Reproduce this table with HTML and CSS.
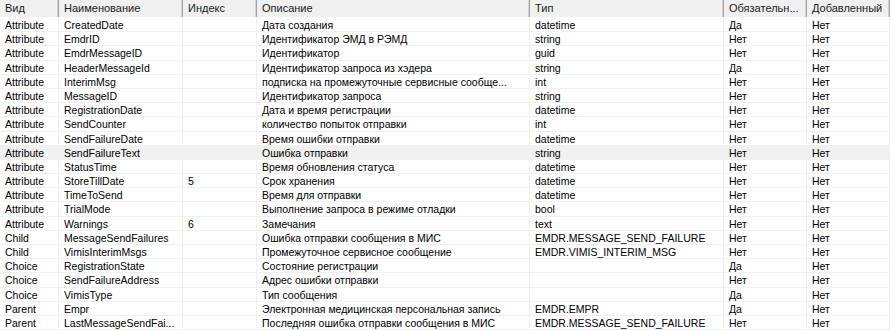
FILE: index.html
```html
<!DOCTYPE html>
<html>
<head>
<meta charset="utf-8">
<link rel="stylesheet" href="styles.css">
</head>
<body>
<div class="grid">
  <div class="row head">
    <div class="c">Вид</div><div class="c">Наименование</div><div class="c">Индекс</div><div class="c">Описание</div><div class="c">Тип</div><div class="c">Обязательн...</div><div class="c">Добавленный</div>
  </div>
  <div class="row"><div class="c">Attribute</div><div class="c">CreatedDate</div><div class="c"></div><div class="c">Дата создания</div><div class="c">datetime</div><div class="c">Да</div><div class="c">Нет</div></div>
  <div class="row"><div class="c">Attribute</div><div class="c">EmdrID</div><div class="c"></div><div class="c">Идентификатор ЭМД в РЭМД</div><div class="c">string</div><div class="c">Нет</div><div class="c">Нет</div></div>
  <div class="row"><div class="c">Attribute</div><div class="c">EmdrMessageID</div><div class="c"></div><div class="c">Идентификатор</div><div class="c">guid</div><div class="c">Нет</div><div class="c">Нет</div></div>
  <div class="row"><div class="c">Attribute</div><div class="c">HeaderMessageId</div><div class="c"></div><div class="c">Идентификатор запроса из хэдера</div><div class="c">string</div><div class="c">Да</div><div class="c">Нет</div></div>
  <div class="row"><div class="c">Attribute</div><div class="c">InterimMsg</div><div class="c"></div><div class="c">подписка на промежуточные сервисные сообще...</div><div class="c">int</div><div class="c">Нет</div><div class="c">Нет</div></div>
  <div class="row"><div class="c">Attribute</div><div class="c">MessageID</div><div class="c"></div><div class="c">Идентификатор запроса</div><div class="c">string</div><div class="c">Нет</div><div class="c">Нет</div></div>
  <div class="row"><div class="c">Attribute</div><div class="c">RegistrationDate</div><div class="c"></div><div class="c">Дата и время регистрации</div><div class="c">datetime</div><div class="c">Нет</div><div class="c">Нет</div></div>
  <div class="row"><div class="c">Attribute</div><div class="c">SendCounter</div><div class="c"></div><div class="c">количество попыток отправки</div><div class="c">int</div><div class="c">Нет</div><div class="c">Нет</div></div>
  <div class="row"><div class="c">Attribute</div><div class="c">SendFailureDate</div><div class="c"></div><div class="c">Время ошибки отправки</div><div class="c">datetime</div><div class="c">Нет</div><div class="c">Нет</div></div>
  <div class="row sel"><div class="c">Attribute</div><div class="c">SendFailureText</div><div class="c"></div><div class="c">Ошибка отправки</div><div class="c">string</div><div class="c">Нет</div><div class="c">Нет</div></div>
  <div class="row"><div class="c">Attribute</div><div class="c">StatusTime</div><div class="c"></div><div class="c">Время обновления статуса</div><div class="c">datetime</div><div class="c">Нет</div><div class="c">Нет</div></div>
  <div class="row"><div class="c">Attribute</div><div class="c">StoreTillDate</div><div class="c">5</div><div class="c">Срок хранения</div><div class="c">datetime</div><div class="c">Нет</div><div class="c">Нет</div></div>
  <div class="row"><div class="c">Attribute</div><div class="c">TimeToSend</div><div class="c"></div><div class="c">Время для отправки</div><div class="c">datetime</div><div class="c">Нет</div><div class="c">Нет</div></div>
  <div class="row"><div class="c">Attribute</div><div class="c">TrialMode</div><div class="c"></div><div class="c">Выполнение запроса в режиме отладки</div><div class="c">bool</div><div class="c">Нет</div><div class="c">Нет</div></div>
  <div class="row"><div class="c">Attribute</div><div class="c">Warnings</div><div class="c">6</div><div class="c">Замечания</div><div class="c">text</div><div class="c">Нет</div><div class="c">Нет</div></div>
  <div class="row"><div class="c">Child</div><div class="c">MessageSendFailures</div><div class="c"></div><div class="c">Ошибка отправки сообщения в МИС</div><div class="c">EMDR.MESSAGE_SEND_FAILURE</div><div class="c">Нет</div><div class="c">Нет</div></div>
  <div class="row"><div class="c">Child</div><div class="c">VimisInterimMsgs</div><div class="c"></div><div class="c">Промежуточное сервисное сообщение</div><div class="c">EMDR.VIMIS_INTERIM_MSG</div><div class="c">Нет</div><div class="c">Нет</div></div>
  <div class="row"><div class="c">Choice</div><div class="c">RegistrationState</div><div class="c"></div><div class="c">Состояние регистрации</div><div class="c"></div><div class="c">Да</div><div class="c">Нет</div></div>
  <div class="row"><div class="c">Choice</div><div class="c">SendFailureAddress</div><div class="c"></div><div class="c">Адрес ошибки отправки</div><div class="c"></div><div class="c">Нет</div><div class="c">Нет</div></div>
  <div class="row"><div class="c">Choice</div><div class="c">VimisType</div><div class="c"></div><div class="c">Тип сообщения</div><div class="c"></div><div class="c">Да</div><div class="c">Нет</div></div>
  <div class="row"><div class="c">Parent</div><div class="c">Empr</div><div class="c"></div><div class="c">Электронная медицинская персональная запись</div><div class="c">EMDR.EMPR</div><div class="c">Да</div><div class="c">Нет</div></div>
  <div class="row"><div class="c">Parent</div><div class="c">LastMessageSendFai...</div><div class="c"></div><div class="c">Последняя ошибка отправки сообщения в МИС</div><div class="c">EMDR.MESSAGE_SEND_FAILURE</div><div class="c">Нет</div><div class="c">Нет</div></div>
</div>
</body>
</html>
```

FILE: styles.css
```css
html, body {
  margin: 0;
  padding: 0;
  background: #ffffff;
  overflow: hidden;
}
body {
  font-family: "Liberation Sans", Arial, sans-serif;
  font-size: 10.5px;
  color: #000;
}
.grid {
  display: flex;
  flex-direction: column;
  width: 890px;
}
.row {
  display: grid;
  grid-template-columns: 59px 124px 74px 273px 194px 83px 83px;
  height: 14.2px;
}
.row .c {
  box-sizing: border-box;
  border-right: 1px solid #f0f0f0;
  border-bottom: 1px solid #f0f0f0;
  padding-left: 5px;
  padding-top: 1px;
  white-space: nowrap;
  overflow: hidden;
  line-height: 13.2px;
}
.row.sel {
  background: #f0f0f0;
}
.row.head {
  height: 18px;
  background: #f0f0f0;
  border-bottom: 1px solid #ffffff;
  box-sizing: border-box;
}
.row.head .c {
  border-bottom: none;
  border-right: 1px solid #a0a0a0;
  box-shadow: inset -1px 0 0 #d4d4d4;
  padding-top: 0;
  line-height: 17px;
  font-size: 11px;
  color: #1a1a1a;
}
```
